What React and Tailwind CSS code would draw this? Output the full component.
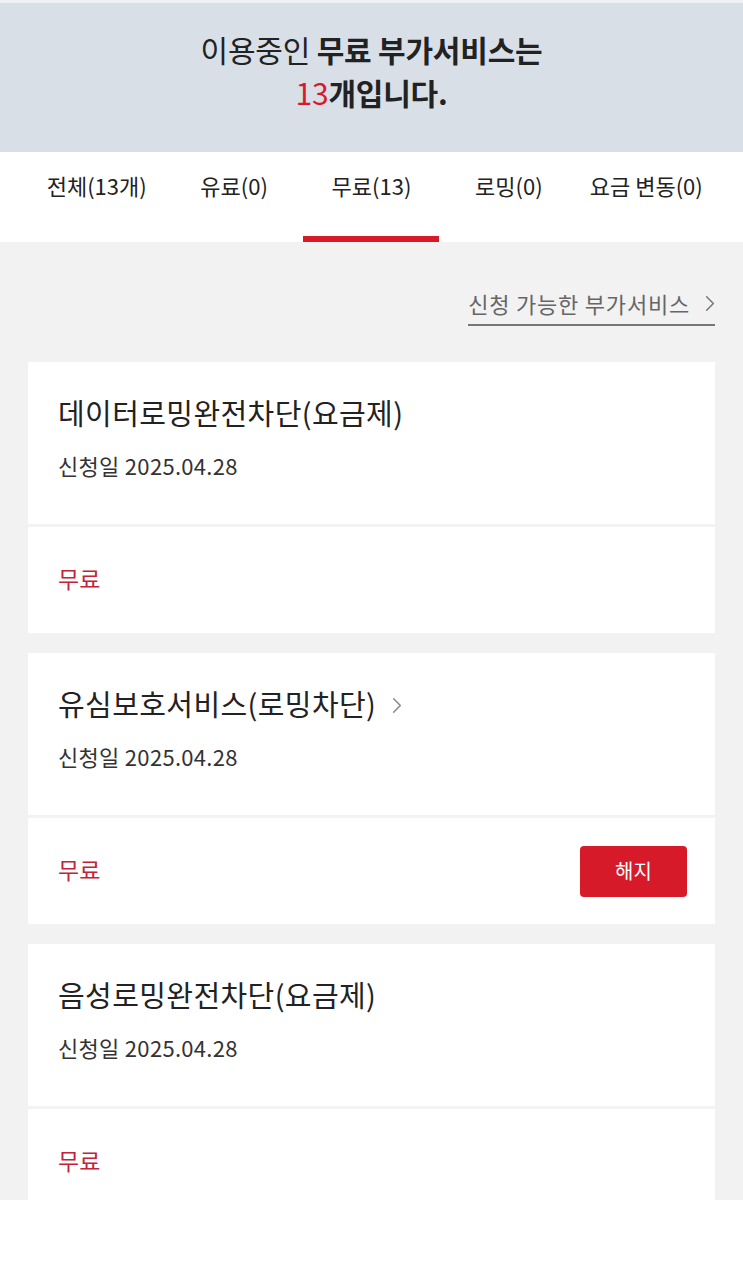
import { useState } from 'react';

const FONT = { fontFamily: '"Noto Sans CJK KR", "Noto Sans", sans-serif' };

const tabs = [
  { id: 'all', label: '전체(13개)' },
  { id: 'paid', label: '유료(0)' },
  { id: 'free', label: '무료(13)' },
  { id: 'roaming', label: '로밍(0)' },
  { id: 'change', label: '요금 변동(0)' },
];

const services = [
  { id: 1, name: '데이터로밍완전차단(요금제)', date: '2025.04.28', link: false, cancel: false },
  { id: 2, name: '유심보호서비스(로밍차단)', date: '2025.04.28', link: true, cancel: true },
  { id: 3, name: '음성로밍완전차단(요금제)', date: '2025.04.28', link: false, cancel: false },
];

const Chevron = ({ className }) => (
  <svg viewBox="0 0 12 20" className={className} fill="none" stroke="currentColor" strokeWidth="1.8" strokeLinecap="round" strokeLinejoin="round">
    <polyline points="2,2 10,10 2,18" />
  </svg>
);

const ServiceCard = ({ service }) => (
  <div className="bg-white">
    <div className="h-[162px] pl-[30px] pt-[32px]">
      <div className="flex items-center">
        <h3 className="text-[29px] leading-[36px] tracking-[0.4px] text-[#222] font-normal">{service.name}</h3>
        {service.link && <Chevron className="w-[10px] h-[17px] ml-[16px] mt-[4px] text-[#888]" />}
      </div>
      <p className="mt-[20px] text-[22px] leading-[30px] tracking-[0.3px] text-[#333]">신청일 {service.date}</p>
    </div>
    <div className="border-t-[3px] border-[#f3f3f3] h-[109px] flex items-center justify-between pl-[30px] pr-[28px]">
      <span className="mb-[5px] text-[23px] leading-[30px] tracking-[0px] text-[#c4213a]">무료</span>
      {service.cancel && (
        <button className="w-[107px] h-[51px] rounded-[4px] bg-[#d71a2a] text-white text-[20px]">
          해지
        </button>
      )}
    </div>
  </div>
);

const App = () => {
  const [activeTab, setActiveTab] = useState('free');

  return (
    <div className="w-[743px] h-[1264px] bg-white overflow-hidden" style={FONT}>
      {/* Header */}
      <div className="border-t-[3px] border-[#eef0f3] h-[152px] bg-[#d9dfe7] flex flex-col items-center justify-center pb-[14px]">
        <p className="text-[30px] leading-[43px] tracking-[-0.2px] text-[#222]">
          이용중인 <span className="font-bold">무료 부가서비스는</span>
        </p>
        <p className="text-[30px] leading-[43px] tracking-[-0.2px] text-[#222] font-bold">
          <span className="text-[#d71a2a] font-normal">13</span>개입니다.
        </p>
      </div>

      {/* Tabs */}
      <div className="h-[90px] bg-white grid grid-cols-5 px-[28px]">
        {tabs.map(tab => (
          <button
            key={tab.id}
            onClick={() => setActiveTab(tab.id)}
            className="flex flex-col items-center h-[90px]"
          >
            <span className="pt-[19px] text-[22px] leading-[28px] tracking-[0px] text-[#222] whitespace-nowrap">{tab.label}</span>
            <span className={`mt-auto h-[6px] w-[136px] ${activeTab === tab.id ? 'bg-[#d71a2a]' : 'bg-transparent'}`} />
          </button>
        ))}
      </div>

      {/* Content */}
      <div className="h-[958px] bg-[#f2f2f2] overflow-hidden px-[28px]">
        <div className="flex justify-end pt-[46px]">
          <a className="flex items-center border-b-2 border-[#777] pb-[6px] text-[22px] leading-[30px] tracking-[0.8px] text-[#666]">
            신청 가능한 부가서비스
            <Chevron className="w-[10px] h-[17px] ml-[15px] text-[#777]" />
          </a>
        </div>

        <div className="mt-[36px] flex flex-col gap-[20px]">
          {services.map(service => (
            <ServiceCard key={service.id} service={service} />
          ))}
        </div>
      </div>
    </div>
  );
};

export default App;
